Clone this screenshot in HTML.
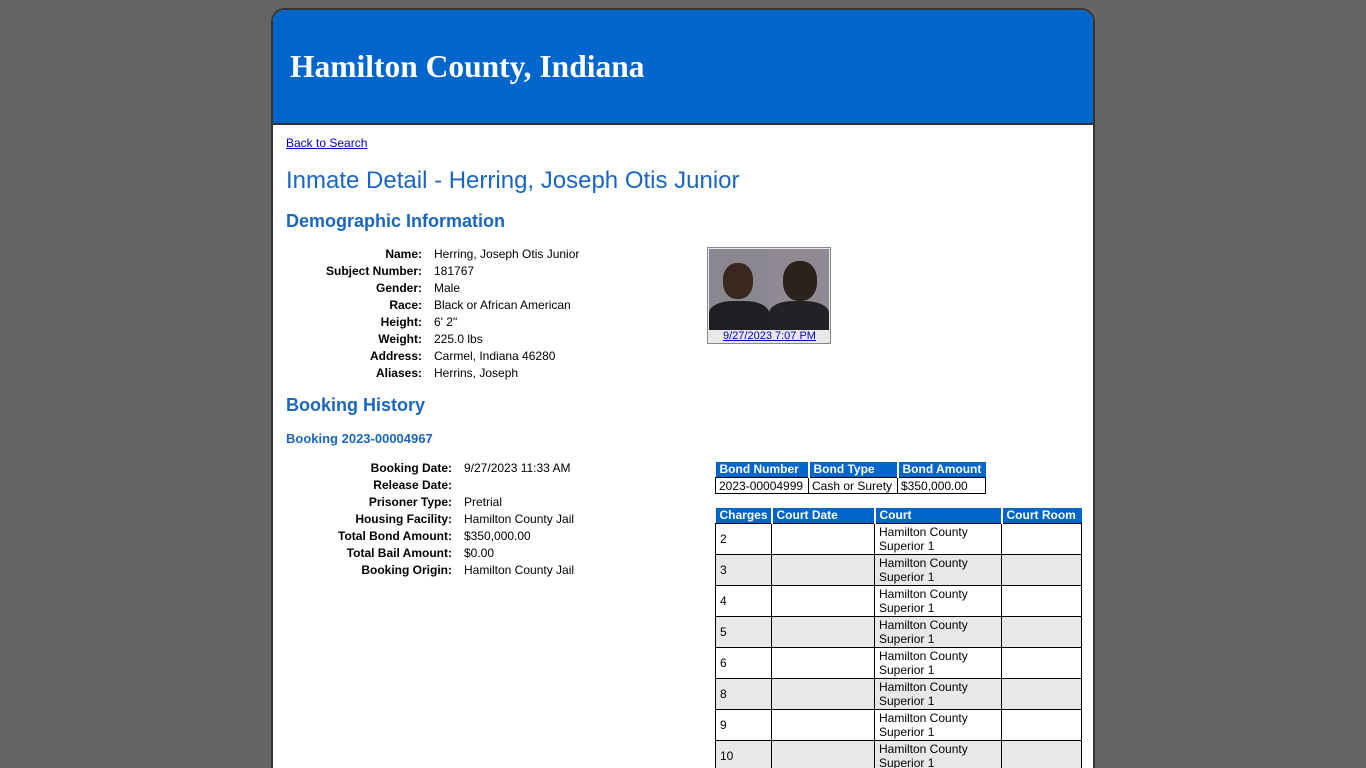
<!DOCTYPE html>
<html style="overflow:hidden;height:768px"><head><style>
body{margin:0;background:#646464;font-family:"Liberation Sans",sans-serif;font-size:12px;color:#000;width:1366px;height:768px;overflow:hidden;position:relative}
#wrap{position:absolute;left:0;top:0;width:1366px;height:768px;overflow:hidden}
.box{position:absolute;left:271px;top:8px;width:820px;height:770px;background:#fff;border:2px solid #333;border-radius:14px 14px 0 0;overflow:hidden}
.hdr{position:absolute;left:0;top:0;width:820px;height:113px;background:#0066cc;border-bottom:2px solid #333}
.hdr h1{position:absolute;left:17px;top:39px;margin:0;font:bold 31.5px "Liberation Serif",serif;color:#fff}
.a{position:absolute;white-space:nowrap}
.lbl{position:absolute;text-align:right;font-weight:bold;white-space:nowrap}
a{color:#00c;text-decoration:underline}
table{position:absolute;border-collapse:collapse;font-size:12px;table-layout:fixed}
th{background:#0066cc;color:#fff;text-align:left;padding:0 4px;height:15px;line-height:15px;border-left:2px solid #fff;font-weight:bold;white-space:nowrap;overflow:hidden}
th:first-child{border-left:none}
td{border:1px solid #000;padding:0 4px;vertical-align:middle;white-space:nowrap;line-height:14px}
.ch td{height:30px}
.ch tr.g td{background:#e8e8e8}
</style></head><body><div id="wrap">
<div class="box">
<div class="hdr"><h1>Hamilton County, Indiana</h1></div>
</div>
<a class="a" style="left:286px;top:136px" href="#">Back to Search</a>
<div class="a" style="left:286px;top:167px;font-size:24px;color:#1a66c2">Inmate Detail - Herring, Joseph Otis Junior</div>
<div class="a" style="left:286px;top:211px;font-size:18px;font-weight:bold;color:#1a66c2">Demographic Information</div>
<div style="position:absolute;left:290px;top:246px;width:132px;line-height:17px" class="lbl">Name:<br>Subject Number:<br>Gender:<br>Race:<br>Height:<br>Weight:<br>Address:<br>Aliases:</div>
<div class="a" style="left:434px;top:246px;line-height:17px">Herring, Joseph Otis Junior<br>181767<br>Male<br>Black or African American<br>6' 2"<br>225.0 lbs<br>Carmel, Indiana 46280<br>Herrins, Joseph</div>
<div class="a" style="left:707px;top:247px;width:122px;height:95px;border:1px solid #888;background:#e8e8e8">
 <div style="position:absolute;left:1px;top:1px;width:60px;height:81px;background:#8a8790;overflow:hidden">
  <div style="position:absolute;left:14px;top:14px;width:30px;height:36px;border-radius:45%;background:#3a2820"></div>
  <div style="position:absolute;left:0;top:52px;width:60px;height:30px;border-radius:40% 40% 0 0;background:#1e1e22"></div></div>
 <div style="position:absolute;left:61px;top:1px;width:60px;height:81px;background:#8f8a94;overflow:hidden">
  <div style="position:absolute;left:14px;top:12px;width:34px;height:40px;border-radius:45%;background:#2c221c"></div>
  <div style="position:absolute;left:0;top:52px;width:60px;height:30px;border-radius:40% 40% 0 0;background:#222226"></div></div>
 <a style="position:absolute;left:15px;top:82px;font-size:11px" href="#">9/27/2023 7:07 PM</a>
</div>
<div class="a" style="left:286px;top:395px;font-size:18px;font-weight:bold;color:#1a66c2">Booking History</div>
<div class="a" style="left:286px;top:431px;font-size:13px;font-weight:bold;color:#1a66c2">Booking 2023-00004967</div>
<div style="position:absolute;left:300px;top:460px;width:152px;line-height:17px" class="lbl">Booking Date:<br>Release Date:<br>Prisoner Type:<br>Housing Facility:<br>Total Bond Amount:<br>Total Bail Amount:<br>Booking Origin:</div>
<div class="a" style="left:464px;top:460px;line-height:17px">9/27/2023 11:33 AM<br>&nbsp;<br>Pretrial<br>Hamilton County Jail<br>$350,000.00<br>$0.00<br>Hamilton County Jail</div>
<table style="left:715px;top:462px;width:270px">
<col style="width:93px"><col style="width:89px"><col style="width:88px">
<tr><th>Bond Number</th><th>Bond Type</th><th>Bond Amount</th></tr>
<tr><td style="height:15px;padding:0 3px">2023-00004999</td><td style="padding:0 3px">Cash or Surety</td><td style="padding:0 3px">$350,000.00</td></tr>
</table>
<table class="ch" style="left:715px;top:508px;width:366px">
<col style="width:56px"><col style="width:103px"><col style="width:127px"><col style="width:80px">
<tr><th>Charges</th><th>Court Date</th><th>Court</th><th>Court Room</th></tr>
<tr><td>2</td><td></td><td>Hamilton County<br>Superior 1</td><td></td></tr>
<tr class="g"><td>3</td><td></td><td>Hamilton County<br>Superior 1</td><td></td></tr>
<tr><td>4</td><td></td><td>Hamilton County<br>Superior 1</td><td></td></tr>
<tr class="g"><td>5</td><td></td><td>Hamilton County<br>Superior 1</td><td></td></tr>
<tr><td>6</td><td></td><td>Hamilton County<br>Superior 1</td><td></td></tr>
<tr class="g"><td>8</td><td></td><td>Hamilton County<br>Superior 1</td><td></td></tr>
<tr><td>9</td><td></td><td>Hamilton County<br>Superior 1</td><td></td></tr>
<tr class="g"><td>10</td><td></td><td>Hamilton County<br>Superior 1</td><td></td></tr>
</table>
</div></body></html>
